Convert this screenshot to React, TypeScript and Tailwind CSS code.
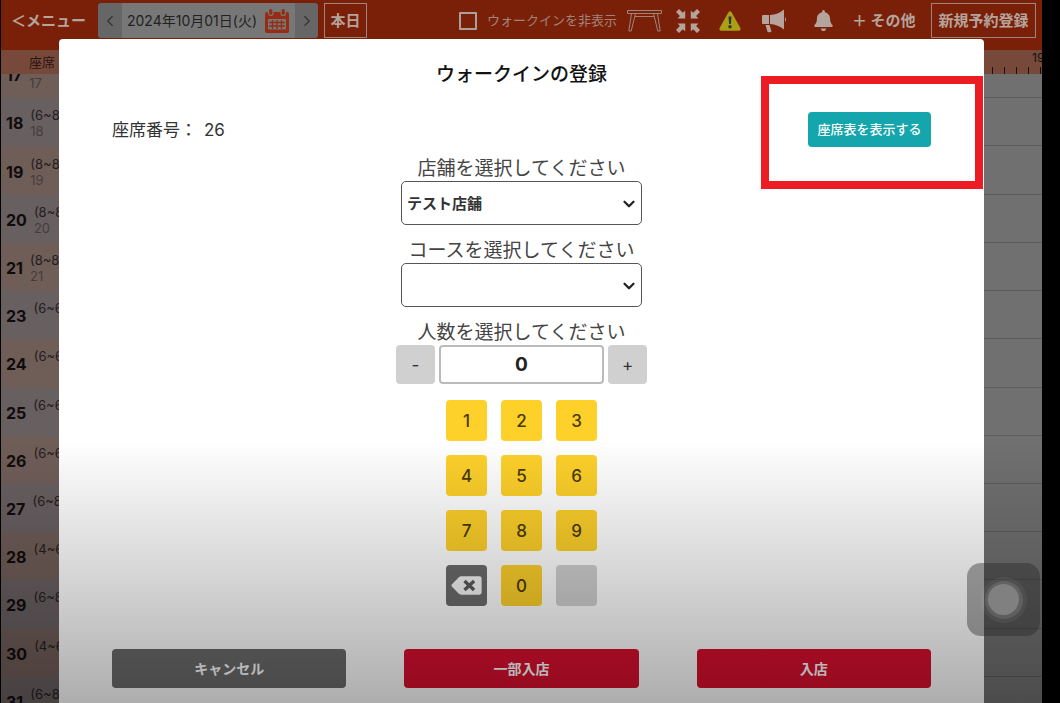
import { useState } from "react"
import { ChevronDown, ChevronLeft, ChevronRight } from "lucide-react"
import { FaBell } from "react-icons/fa"

interface SeatRow {
  id: string
  capacity?: string
  name?: string
}

const seatRows: SeatRow[] = [
  { id: "17", name: "17" },
  { id: "18", capacity: "(6~8)", name: "18" },
  { id: "19", capacity: "(8~8)", name: "19" },
  { id: "20", capacity: "(8~8)", name: "20" },
  { id: "21", capacity: "(8~8)", name: "21" },
  { id: "23", capacity: "(6~6)" },
  { id: "24", capacity: "(6~6)" },
  { id: "25", capacity: "(6~6)" },
  { id: "26", capacity: "(6~6)" },
  { id: "27", capacity: "(6~8)" },
  { id: "28", capacity: "(4~6)" },
  { id: "29", capacity: "(6~8)" },
  { id: "30", capacity: "(4~6)" },
  { id: "31", capacity: "(6~8)" },
]

const digits = ["1", "2", "3", "4", "5", "6", "7", "8", "9"]

function CalendarIcon() {
  return (
    <svg width="24" height="25" viewBox="0 0 24 25" fill="none" aria-hidden="true">
      <path d="M2 4h20q2 0 2 2v17q0 2-2 2H2q-2 0-2-2V6q0-2 2-2z" fill="#962c12" />
      <rect x="3.500" y="0.500" width="4.500" height="7" rx="2.200" fill="#962c12" stroke="#777" strokeWidth="1.200" />
      <rect x="16" y="0.500" width="4.500" height="7" rx="2.200" fill="#962c12" stroke="#777" strokeWidth="1.200" />
      <rect x="3" y="11" width="18" height="10.500" rx="1" fill="#777" />
      <path d="M4 14.500h16M4 18h16M7.500 12v9M12 12v9M16.500 12v9" stroke="#962c12" strokeWidth="1.300" />
    </svg>
  )
}

function TableIcon() {
  return (
    <svg width="35" height="23" viewBox="0 0 35 23" fill="none" stroke="#a08379" strokeWidth="1" aria-hidden="true">
      <path d="M0.5 1.5h34v3h-34z" />
      <path d="M4.5 4.5L1.8 22h2.4L8.5 4.5M30.5 4.5L33.2 22h-2.4L26.5 4.5" />
      <path d="M8 7.5h19" />
    </svg>
  )
}

function CompressIcon() {
  return (
    <svg width="24" height="24" viewBox="0 0 24 24" fill="currentColor" className="ml-[14px]" aria-hidden="true">
      <path d="M0 3L3 0L6.8 3.800L9.2 1.800V9.4H1.600L3.900 6.9z" />
      <path d="M24 3L21 0L17.2 3.800L14.8 1.800V9.4H22.400L20.100 6.9z" />
      <path d="M0 21L3 24L6.8 20.200L9.2 22.200V14.6H1.600L3.900 17.1z" />
      <path d="M24 21L21 24L17.2 20.200L14.8 22.200V14.6H22.400L20.100 17.1z" />
    </svg>
  )
}

function WarningIcon() {
  return (
    <svg width="22" height="20" viewBox="0 0 22 20" className="ml-[19px]" aria-hidden="true">
      <path d="M9.6 0.9Q11 -0.6 12.4 0.9L21.5 17.2Q22 19.5 20 19.7H2Q0 19.5 0.5 17.2z" fill="#aaa014" />
      <path d="M9.5 5.5h3l-0.6 7.5h-1.8z" fill="#33343a" />
      <circle cx="11" cy="15.8" r="1.7" fill="#33343a" />
    </svg>
  )
}

function MegaphoneIcon() {
  return (
    <svg width="25" height="24" viewBox="0 0 25 24" fill="currentColor" className="ml-[21px]" aria-hidden="true">
      <path d="M1 6h6v9H1Q0 15 0 14V7Q0 6 1 6z" />
      <path d="M8 6Q16 5.5 22 0.5V20.5Q16 15.5 8 15z" />
      <path d="M23 8q2 2.500 0 5z" />
      <path d="M3.500 16H7.500L9.500 22.500Q8 24 5.500 22.800z" />
    </svg>
  )
}

function BackspaceIcon() {
  return (
    <svg width="31" height="19" viewBox="0 0 31 19" aria-hidden="true">
      <path d="M0.8 8.6L7.6 1.4Q8.8 0.3 10.4 0.3H28.5Q30.6 0.3 30.6 2.4V16.6Q30.6 18.7 28.5 18.7H10.4Q8.8 18.7 7.6 17.6L0.8 10.4Q0 9.5 0.8 8.6z" fill="#f4f4f4" />
      <path d="M13.5 5l9.600 9M23.100 5L13.500 14" stroke="#5b5b5b" strokeWidth="3.4" />
    </svg>
  )
}

function TopBar() {
  return (
    <header className="flex h-[50px] shrink-0 items-start justify-between bg-[#7a2009] pt-[3px] pr-[6px] pl-[10px] text-[#b5a49c]">
      <div className="flex h-[35px] items-center">
        <a href="#menu" className="w-[87px] pt-[2px] text-[15px] font-bold whitespace-nowrap">
          ＜メニュー
        </a>
        <div className="flex h-full items-stretch overflow-hidden rounded-[4px] bg-[#777] text-[#222]">
          <button type="button" aria-label="前日" className="flex w-6 items-center justify-center bg-[#666] text-[#333]">
            <ChevronLeft size={18} strokeWidth={1.5} />
          </button>
          <button type="button" className="flex w-[173px] items-center justify-between pr-[6px] pl-[5px] text-[14px]">
            2024年10月01日(火)
            <CalendarIcon />
          </button>
          <button type="button" aria-label="翌日" className="flex w-[23px] items-center justify-center bg-[#666] text-[#333]">
            <ChevronRight size={18} strokeWidth={1.5} />
          </button>
        </div>
        <button type="button" className="ml-[6px] h-full w-[43px] border border-[#a08379] pt-[2px] text-[15px] font-bold">
          本日
        </button>
      </div>

      <div className="flex h-[35px] items-center">
        <label className="mr-[10px] flex items-center gap-[10px] text-[13px] whitespace-nowrap text-[#a08379]">
          <input type="checkbox" className="h-[18px] w-[18px] appearance-none rounded-[1px] border-2 border-[#a9a09c]" />
          ウォークインを非表示
        </label>
        <TableIcon />
        <CompressIcon />
        <WarningIcon />
        <MegaphoneIcon />
        <FaBell size={21} className="ml-[26px]" />
        <button type="button" className="ml-[18px] w-[67px] pt-[2px] text-left text-[15px] font-bold whitespace-nowrap">
          ＋ その他
        </button>
        <button type="button" className="ml-[12px] h-full w-[105px] border border-[#a08379] pt-[2px] text-[15px] font-bold whitespace-nowrap">
          新規予約登録
        </button>
      </div>
    </header>
  )
}

function SeatBoard() {
  return (
    <div className="flex min-h-0 flex-1 flex-col">
      <div className="flex h-6 shrink-0 justify-between bg-[#77493b] text-[13px] leading-6 text-[#2a1611]">
        <span className="pl-7">座席</span>
        <div className="relative w-[58px] overflow-hidden pl-2">
          <span className="absolute top-0 left-12 text-[12px] leading-4 text-[#111]">19</span>
          <div className="flex h-full items-end gap-[11px]">
            {[0, 1, 2, 3, 4].map((tick) => (
              <span key={tick} className="h-[7px] w-px shrink-0 bg-[#1c100c]" />
            ))}
          </div>
        </div>
      </div>
      <div className="min-h-0 flex-1 overflow-hidden">
        <ul className="-mt-[24px] grid h-[675px] auto-rows-fr">
          {seatRows.map((row) => (
            <li key={row.id} className="group flex">
              <div className="flex w-[58px] shrink-0 items-center gap-[7px] overflow-hidden bg-[#685f61] pt-[2px] pl-[5px] group-odd:bg-[#6f5d58]">
                <span className="text-[16px] font-bold text-[#100c0c]">{row.id}</span>
                <div className="h-8 text-[13px] leading-4">
                  <div className="h-4 text-[#221d1d]">{row.capacity}</div>
                  <div className="text-[#453d3d]">{row.name}</div>
                </div>
              </div>
              <div className="flex-1 border-b border-[#5c5c5c] bg-[#707070]" />
            </li>
          ))}
        </ul>
      </div>
    </div>
  )
}

interface SelectFieldProps {
  id: string
  label: string
  options: string[]
}

function SelectField({ id, label, options }: SelectFieldProps) {
  return (
    <div className="flex flex-col items-center">
      <label htmlFor={id} className="h-7 text-[19px] leading-8 whitespace-nowrap text-[#444]">
        {label}
      </label>
      <div className="relative">
        <select
          id={id}
          className="h-11 w-[241px] appearance-none rounded-[5px] border border-[#555] bg-white px-[5px] pt-[2px] text-[15px] font-bold text-[#333]"
        >
          {options.map((option) => (
            <option key={option}>{option}</option>
          ))}
        </select>
        <ChevronDown
          size={18}
          strokeWidth={3}
          className="pointer-events-none absolute top-[14px] right-1 text-[#222]"
        />
      </div>
    </div>
  )
}

function WalkInDialog() {
  const [count, setCount] = useState(0)

  const pressDigit = (digit: string) => setCount(Number(`${count}${digit}`))

  return (
    <section
      role="dialog"
      aria-labelledby="walkin-title"
      className="absolute inset-x-[58px] top-[39px] bottom-0 flex flex-col rounded-t-[4px] bg-white px-[53px] pt-5 pb-[15px] text-[#333]"
    >
      <h1 id="walkin-title" className="h-7 text-center text-[19px] leading-8 font-medium text-[#111]">
        ウォークインの登録
      </h1>

      <div className="mt-[25px] flex items-center justify-between">
        <p className="flex gap-[7px] text-[17px] leading-7">
          <span>座席番号：</span>
          <span>26</span>
        </p>
        <button type="button" className="h-[35px] w-[123px] rounded-[4px] bg-[#14a5ad] text-[13px] font-medium text-white">
          座席表を表示する
        </button>
      </div>

      <div className="mt-[6px] flex flex-col items-center gap-[10px]">
        <SelectField id="shop" label="店舗を選択してください" options={["テスト店舗"]} />
        <SelectField id="course" label="コースを選択してください" options={[""]} />
        <div className="flex flex-col items-center">
          <label htmlFor="count" className="h-7 text-[19px] leading-8 whitespace-nowrap text-[#444]">
            人数を選択してください
          </label>
          <div className="flex gap-1">
            <button
              type="button"
              onClick={() => setCount(Math.max(0, count - 1))}
              className="h-[39px] w-[39px] rounded-[4px] bg-[#d0d0d0] pt-[2px] text-[17px]"
            >
              -
            </button>
            <input
              id="count"
              readOnly
              value={count}
              className="h-[39px] w-[165px] rounded-[4px] border-2 border-[#bbb] text-center text-[19px] font-bold text-[#222]"
            />
            <button
              type="button"
              onClick={() => setCount(count + 1)}
              className="h-[39px] w-[39px] rounded-[4px] bg-[#d0d0d0] pt-[2px] text-[17px]"
            >
              +
            </button>
          </div>
        </div>
      </div>

      <div className="mx-auto mt-4 grid grid-cols-3 gap-[14px] text-[17px] font-medium text-[#4a3a08]">
        {digits.map((digit) => (
          <button
            key={digit}
            type="button"
            onClick={() => pressDigit(digit)}
            className="h-[41px] w-[41px] rounded-[4px] bg-[#fdd02a] pt-[2px]"
          >
            {digit}
          </button>
        ))}
        <button
          type="button"
          aria-label="1文字削除"
          onClick={() => setCount(Math.floor(count / 10))}
          className="flex h-[41px] w-[41px] items-center justify-center rounded-[4px] bg-[#6b6b6b]"
        >
          <BackspaceIcon />
        </button>
        <button type="button" onClick={() => pressDigit("0")} className="h-[41px] w-[41px] rounded-[4px] bg-[#fdd02a] pt-[2px]">
          0
        </button>
        <span className="h-[41px] w-[41px] rounded-[4px] bg-[#d0d0d0]" />
      </div>

      <div className="mt-auto grid grid-cols-3 gap-[58px] text-[14px] font-bold text-white">
        <button type="button" className="h-[39px] rounded-[4px] bg-[#6b6b6b]">
          キャンセル
        </button>
        <button type="button" className="h-[39px] rounded-[4px] bg-[#d80f2e]">
          一部入店
        </button>
        <button type="button" className="h-[39px] rounded-[4px] bg-[#d80f2e]">
          入店
        </button>
      </div>
    </section>
  )
}

export default function App() {
  return (
    <div className="relative h-screen overflow-hidden bg-black pr-[18px] pl-px font-[Inter,'Noto_Sans_CJK_JP',sans-serif]">
      <main className="relative flex h-full flex-col overflow-hidden">
        <TopBar />
        <SeatBoard />
        <WalkInDialog />
        {/* player shade along the bottom edge */}
        <div className="pointer-events-none absolute inset-x-0 bottom-0 h-[263px] bg-linear-to-t from-black/32 to-transparent" />
        <button
          type="button"
          aria-label="AssistiveTouch"
          className="absolute right-[2px] bottom-[67px] flex h-[73px] w-[73px] items-center justify-center rounded-[14px] bg-[#262626]/40"
        >
          <span className="flex h-[46px] w-[46px] items-center justify-center rounded-full bg-white/5">
            <span className="flex h-[38px] w-[38px] items-center justify-center rounded-full bg-white/10">
              <span className="h-[31px] w-[31px] rounded-full bg-[#808080]" />
            </span>
          </span>
        </button>
      </main>
      <div className="pointer-events-none absolute top-[76px] right-[77px] h-[113px] w-[222px] border-8 border-[#ed1c24]" />
    </div>
  )
}
